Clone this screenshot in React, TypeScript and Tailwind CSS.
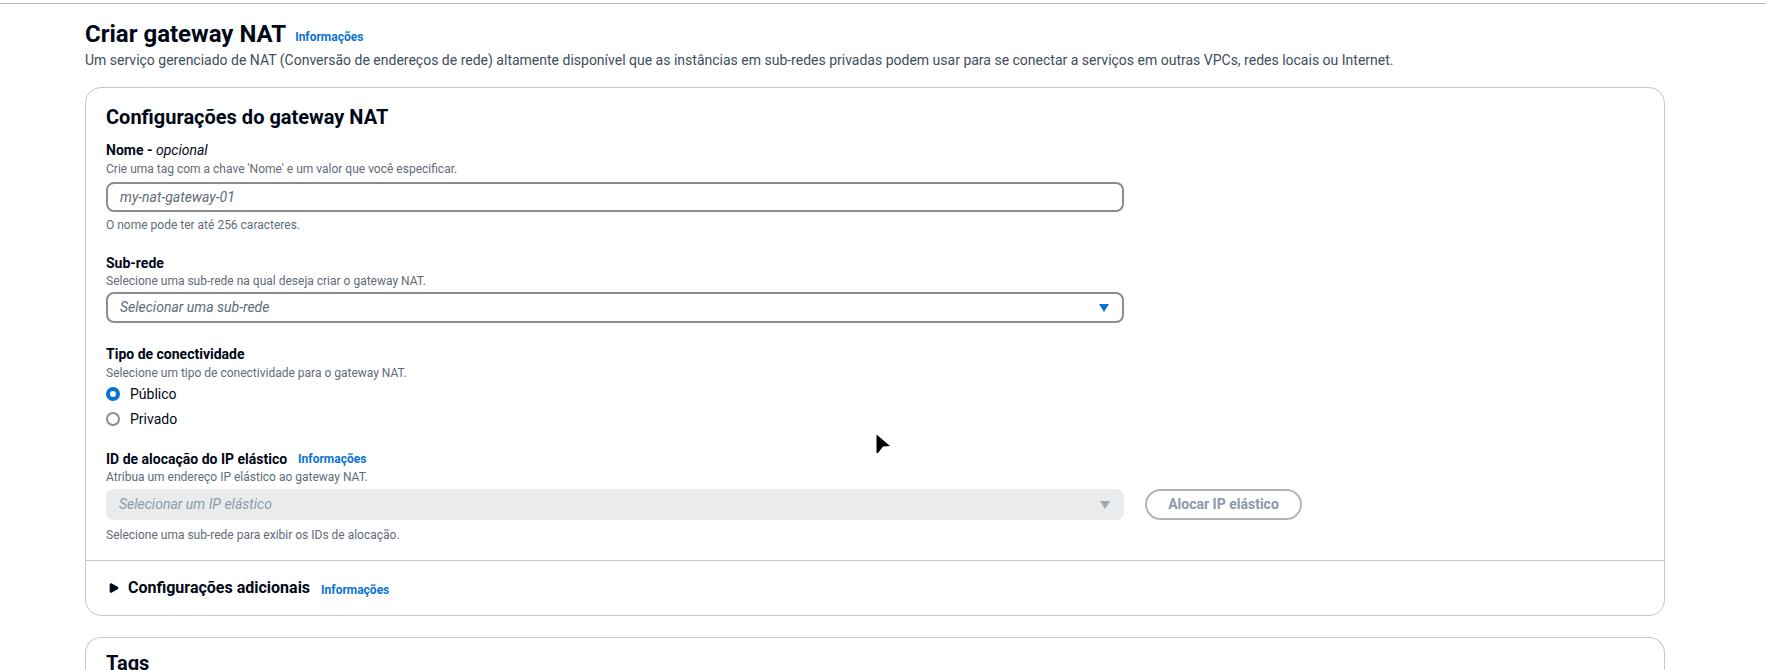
import { Triangle } from "lucide-react"

function Info({ className = "" }: { className?: string }) {
  return <span className={`text-[12px] font-bold text-[#0972d3] leading-4 ${className}`}>Informações</span>
}

function Caret({ color }: { color: string }) {
  return (
    <svg width="10" height="8" viewBox="0 0 10 8" className="shrink-0">
      <path d="M0 0 H10 L5 8 Z" fill={color} />
    </svg>
  )
}

function Radio({ checked, label }: { checked?: boolean; label: string }) {
  return (
    <div className="flex items-center h-[22px]">
      {checked ? (
        <span className="w-[14px] h-[14px] rounded-full border-[4px] border-[#0972d3] bg-white" />
      ) : (
        <span className="w-[14px] h-[14px] rounded-full border-2 border-[#8c8c94] bg-white" />
      )}
      <span className="ml-[10px] text-[14px] leading-5">{label}</span>
    </div>
  )
}

export default function App() {
  return (
    <div className="relative min-h-screen bg-white text-[#000716] font-['Roboto',sans-serif] overflow-hidden">
      <div className="h-[3px]" />
      <div className="border-t border-[#b4b4bb]" />

      <div className="pl-[85px] pr-[101px]">
        {/* Page header */}
        <div className="mt-[14px] flex items-center h-[32px]">
          <h1 className="text-[24px] font-bold leading-8">Criar gateway NAT</h1>
          <Info className="ml-[9px] mt-[6px]" />
        </div>
        <p className="text-[14px] leading-5 text-[#414d5c]">
          Um serviço gerenciado de NAT (Conversão de endereços de rede) altamente disponível que as instâncias em sub-redes privadas podem usar para se conectar a serviços em outras VPCs, redes locais ou Internet.
        </p>

        {/* Main card */}
        <div className="mt-[17px] rounded-2xl border border-[#c6c6cd]">
          <div className="px-[20px] pt-[15px] pb-[17px]">
            <h2 className="text-[20px] font-bold leading-7">Configurações do gateway NAT</h2>

            <div className="mt-[9px] text-[14px] leading-5 font-bold">
              Nome - <span className="italic font-normal">opcional</span>
            </div>
            <div className="mt-[1px] text-[12px] leading-4 text-[#5f6b7a]">
              Crie uma tag com a chave 'Nome' e um valor que você especificar.
            </div>
            <div className="mt-[5px] w-[1018px] h-[30px] rounded-lg border-2 border-[#8c8c94] flex items-center px-[12px]">
              <span className="text-[14px] italic text-[#5f6b7a]">my-nat-gateway-01</span>
            </div>
            <div className="mt-[5px] text-[12px] leading-4 text-[#5f6b7a]">O nome pode ter até 256 caracteres.</div>

            <div className="mt-[20px] text-[14px] leading-5 font-bold">Sub-rede</div>
            <div className="text-[12px] leading-4 text-[#5f6b7a]">Selecione uma sub-rede na qual deseja criar o gateway NAT.</div>
            <div className="mt-[3px] w-[1018px] h-[31px] rounded-lg border-2 border-[#8c8c94] flex items-center justify-between pl-[12px] pr-[13px]">
              <span className="text-[14px] italic text-[#5f6b7a]">Selecionar uma sub-rede</span>
              <Caret color="#0972d3" />
            </div>

            <div className="mt-[21px] text-[14px] leading-5 font-bold">Tipo de conectividade</div>
            <div className="mt-[1px] text-[12px] leading-4 text-[#5f6b7a]">Selecione um tipo de conectividade para o gateway NAT.</div>
            <div className="mt-[2px] flex flex-col gap-[3px]">
              <Radio checked label="Público" />
              <Radio label="Privado" />
            </div>

            <div className="mt-[19px] flex items-center">
              <span className="text-[14px] leading-5 font-bold">ID de alocação do IP elástico</span>
              <Info className="ml-[11px]" />
            </div>
            <div className="text-[12px] leading-4 text-[#5f6b7a]">Atribua um endereço IP elástico ao gateway NAT.</div>
            <div className="mt-[4px] flex items-center gap-[21px]">
              <div className="w-[1018px] h-[31px] rounded-lg bg-[#e9ebed] flex items-center justify-between pl-[13px] pr-[14px]">
                <span className="text-[14px] italic text-[#8d99a8]">Selecionar um IP elástico</span>
                <Caret color="#9ba7b6" />
              </div>
              <button className="h-[31px] w-[157px] rounded-full border-2 border-[#b4b4bb] text-[14px] font-bold text-[#8d99a8]">
                Alocar IP elástico
              </button>
            </div>
            <div className="mt-[7px] text-[12px] leading-4 text-[#5f6b7a]">Selecione uma sub-rede para exibir os IDs de alocação.</div>
          </div>

          <div className="border-t border-[#c6c6cd] px-[20px] pt-[13px] pb-[13px]">
            <div className="flex items-center h-[28px]">
              <Triangle className="w-[10px] h-[10px] rotate-90 fill-[#000716] text-[#000716] ml-[3px]" strokeWidth={3} />
              <span className="ml-[9px] text-[16px] font-bold leading-7">Configurações adicionais</span>
              <Info className="ml-[11px] mt-[3px]" />
            </div>
          </div>
        </div>

        {/* Tags card */}
        <div className="mt-[21px] rounded-t-2xl border border-b-0 border-[#c6c6cd] px-[20px] pt-[11px] h-[60px]">
          <h2 className="text-[20px] font-bold leading-7">Tags</h2>
        </div>
      </div>

      {/* mouse pointer */}
      <svg className="absolute left-[876px] top-[434px]" width="15" height="20" viewBox="0 0 15 20">
        <path d="M0.5 0.5 L14 12 L7 12.5 L2 19 L0.5 19 Z" fill="#000" />
      </svg>
    </div>
  )
}
